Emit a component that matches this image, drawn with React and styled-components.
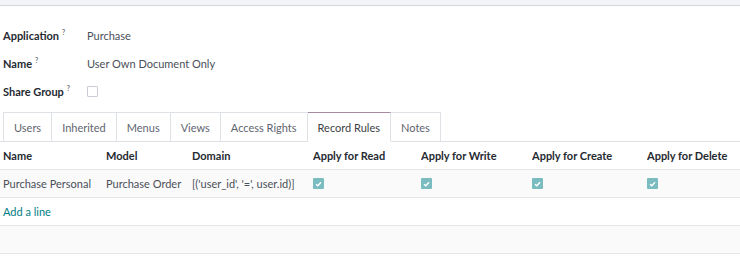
import styled, { createGlobalStyle } from 'styled-components';

const GlobalStyle = createGlobalStyle`
  body {
    margin: 0;
    background: #ffffff;
    font-family: Lato, "Noto Sans", sans-serif;
    font-size: 11px;
    color: #444b5a;
  }
`;

const Page = styled.main`
  width: 740px;
  height: 269px;
  overflow: hidden;
`;

const TopBand = styled.div`
  height: 5px;
  background: #f3f4f7;
  border-bottom: 1px solid #d6d6d9;
`;

const Fields = styled.section`
  display: flex;
  flex-direction: column;
  padding: 15px 0 0 3px;
`;

const FieldRow = styled.div`
  display: flex;
  align-items: center;
  height: 28px;
`;

const Label = styled.div`
  width: 84px;
  flex-shrink: 0;
  white-space: nowrap;
  font-weight: 700;
  color: #262a31;
`;

const Help = styled.sup`
  font-size: 7px;
  font-weight: 700;
  color: #6c757d;
  margin-left: 3px;
`;

const Value = styled.div`
  color: #4a4f59;
`;

const Checkbox = styled.span`
  display: inline-block;
  width: 11px;
  height: 11px;
  box-sizing: border-box;
  border: 1px solid #c9ccd2;
  border-radius: 1px;
  background: #fff;
`;

const Tabs = styled.nav`
  display: flex;
  margin-top: 7px;
  padding-left: 3px;
  border-bottom: 1px solid #dee2e6;
`;

const Tab = styled.div`
  height: 28px;
  display: flex;
  align-items: center;
  padding: 0 10px;
  border: 1px solid #dee2e6;
  border-left: none;
  border-top-color: ${(p) => (p.$active ? '#a58aa0' : '#dee2e6')};
  margin-bottom: -1px;
  background: #fff;
  color: ${(p) => (p.$active ? '#3d3f45' : '#5f6570')};
  border-bottom-color: ${(p) => (p.$active ? '#fff' : '#dee2e6')};
  &:first-child {
    border-left: 1px solid #dee2e6;
  }
`;

const Table = styled.div`
  display: grid;
  grid-template-columns: 106px 86px 121px 108px 111px 115px 93px;
`;

const Row = styled.div`
  display: contents;
`;

const Cell = styled.div`
  height: 27px;
  display: flex;
  align-items: center;
  padding-left: ${(p) => (p.$first ? 3 : 0)}px;
  border-bottom: 1px solid #e4e6e9;
  background: ${(p) => p.$bg || '#fff'};
  font-weight: ${(p) => (p.$head ? 700 : 400)};
  color: ${(p) => (p.$head ? '#262a31' : '#4a4f59')};
  white-space: nowrap;
  overflow: hidden;
`;

const WideCell = styled(Cell)`
  grid-column: 1 / -1;
  color: ${(p) => p.$color || '#4a4f59'};
`;

const Tick = styled.span`
  display: inline-flex;
  align-items: center;
  justify-content: center;
  width: 11px;
  height: 11px;
  background: #7bbcc1;
  border-radius: 1px;
`;

function CheckMark() {
  return (
    <Tick>
      <svg width="7" height="6" viewBox="0 0 7 6">
        <path d="M1 3.2 L2.8 4.8 L6 1.2" stroke="#fff" strokeWidth="1.4" fill="none" />
      </svg>
    </Tick>
  );
}

const headers = ['Name', 'Model', 'Domain', 'Apply for Read', 'Apply for Write', 'Apply for Create', 'Apply for Delete'];

export default function App() {
  return (
    <Page>
      <GlobalStyle />
      <TopBand />
      <Fields>
        <FieldRow>
          <Label>Application<Help>?</Help></Label>
          <Value>Purchase</Value>
        </FieldRow>
        <FieldRow>
          <Label>Name<Help>?</Help></Label>
          <Value>User Own Document Only</Value>
        </FieldRow>
        <FieldRow>
          <Label>Share Group<Help>?</Help></Label>
          <Checkbox />
        </FieldRow>
      </Fields>
      <Tabs>
        <Tab>Users</Tab>
        <Tab>Inherited</Tab>
        <Tab>Menus</Tab>
        <Tab>Views</Tab>
        <Tab>Access Rights</Tab>
        <Tab $active>Record Rules</Tab>
        <Tab>Notes</Tab>
      </Tabs>
      <Table>
        <Row>
          {headers.map((h, i) => (
            <Cell key={h} $head $first={i === 0}>{h}</Cell>
          ))}
        </Row>
        <Row>
          <Cell $first $bg="#fafafa">Purchase Personal</Cell>
          <Cell $bg="#fafafa">Purchase Order</Cell>
          <Cell $bg="#fafafa">[('user_id', '=', user.id)]</Cell>
          <Cell $bg="#fafafa"><CheckMark /></Cell>
          <Cell $bg="#fafafa"><CheckMark /></Cell>
          <Cell $bg="#fafafa"><CheckMark /></Cell>
          <Cell $bg="#fafafa"><CheckMark /></Cell>
        </Row>
        <WideCell $first $color="#017e84">Add a line</WideCell>
        <WideCell $first $bg="#fafafa" />
      </Table>
    </Page>
  );
}
